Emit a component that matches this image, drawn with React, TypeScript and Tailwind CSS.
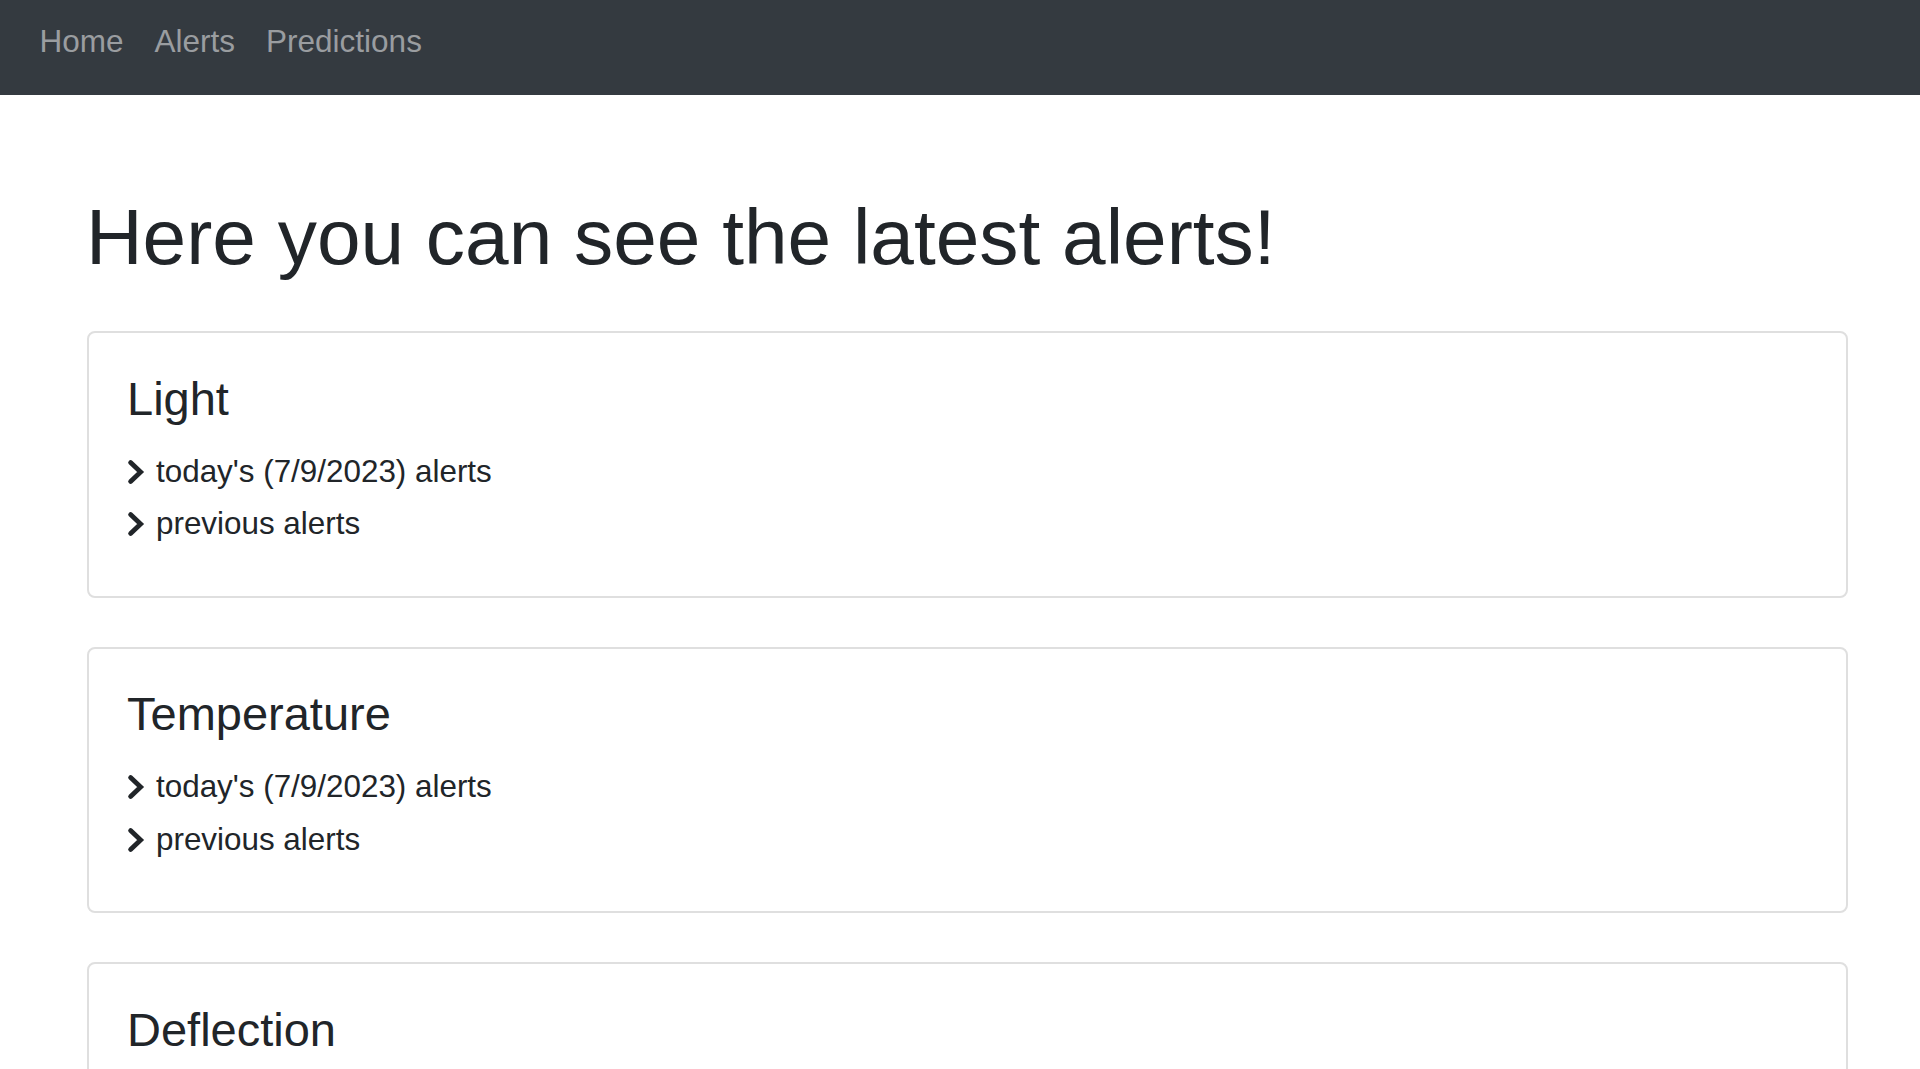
import React from "react";

function Chevron() {
  return (
    <svg width="18" height="26" viewBox="0 0 18 26" className="shrink-0 mr-[11px]" aria-hidden="true">
      <path d="M3.6 3.6 L13.6 13 L3.6 22.4" fill="none" stroke="#212529" strokeWidth="4.8" strokeLinecap="round" strokeLinejoin="miter" />
    </svg>
  );
}

function Item({ text }: { text: string }) {
  return (
    <div className="flex items-center h-[52.5px] text-[31.4px] leading-[52.5px] text-[#212529]">
      <Chevron />
      <span>{text}</span>
    </div>
  );
}

function Card({ title }: { title: string }) {
  return (
    <div className="border-2 border-[#dfdfdf] rounded-[8px] bg-white pl-[38px] pr-[38px] pt-[37.5px] pb-[45px]">
      <h4 className="text-[47px] leading-[56px] text-[#212529] mb-[19px]">{title}</h4>
      <Item text="today's (7/9/2023) alerts" />
      <Item text="previous alerts" />
    </div>
  );
}

export default function App() {
  return (
    <div className="min-h-screen bg-white" style={{ fontFamily: '"Liberation Sans", Arial, sans-serif' }}>
      <nav className="h-[95px] bg-[#343a40] flex items-start pt-[18px] pl-[24px]">
        {["Home", "Alerts", "Predictions"].map((l) => (
          <a key={l} className="px-[15.5px] text-[31.5px] leading-[46.5px] text-[#9a9da0]">
            {l}
          </a>
        ))}
      </nav>
      <main className="pl-[86px] pr-[72px]">
        <h1 className="mt-[96px] mb-[47px] text-[78.4px] leading-[93px] text-[#212529]">
          Here you can see the latest alerts!
        </h1>
        <div className="pl-[1px] flex flex-col gap-[49px] pb-[60px]">
          <Card title="Light" />
          <Card title="Temperature" />
          <Card title="Deflection" />
        </div>
      </main>
    </div>
  );
}
